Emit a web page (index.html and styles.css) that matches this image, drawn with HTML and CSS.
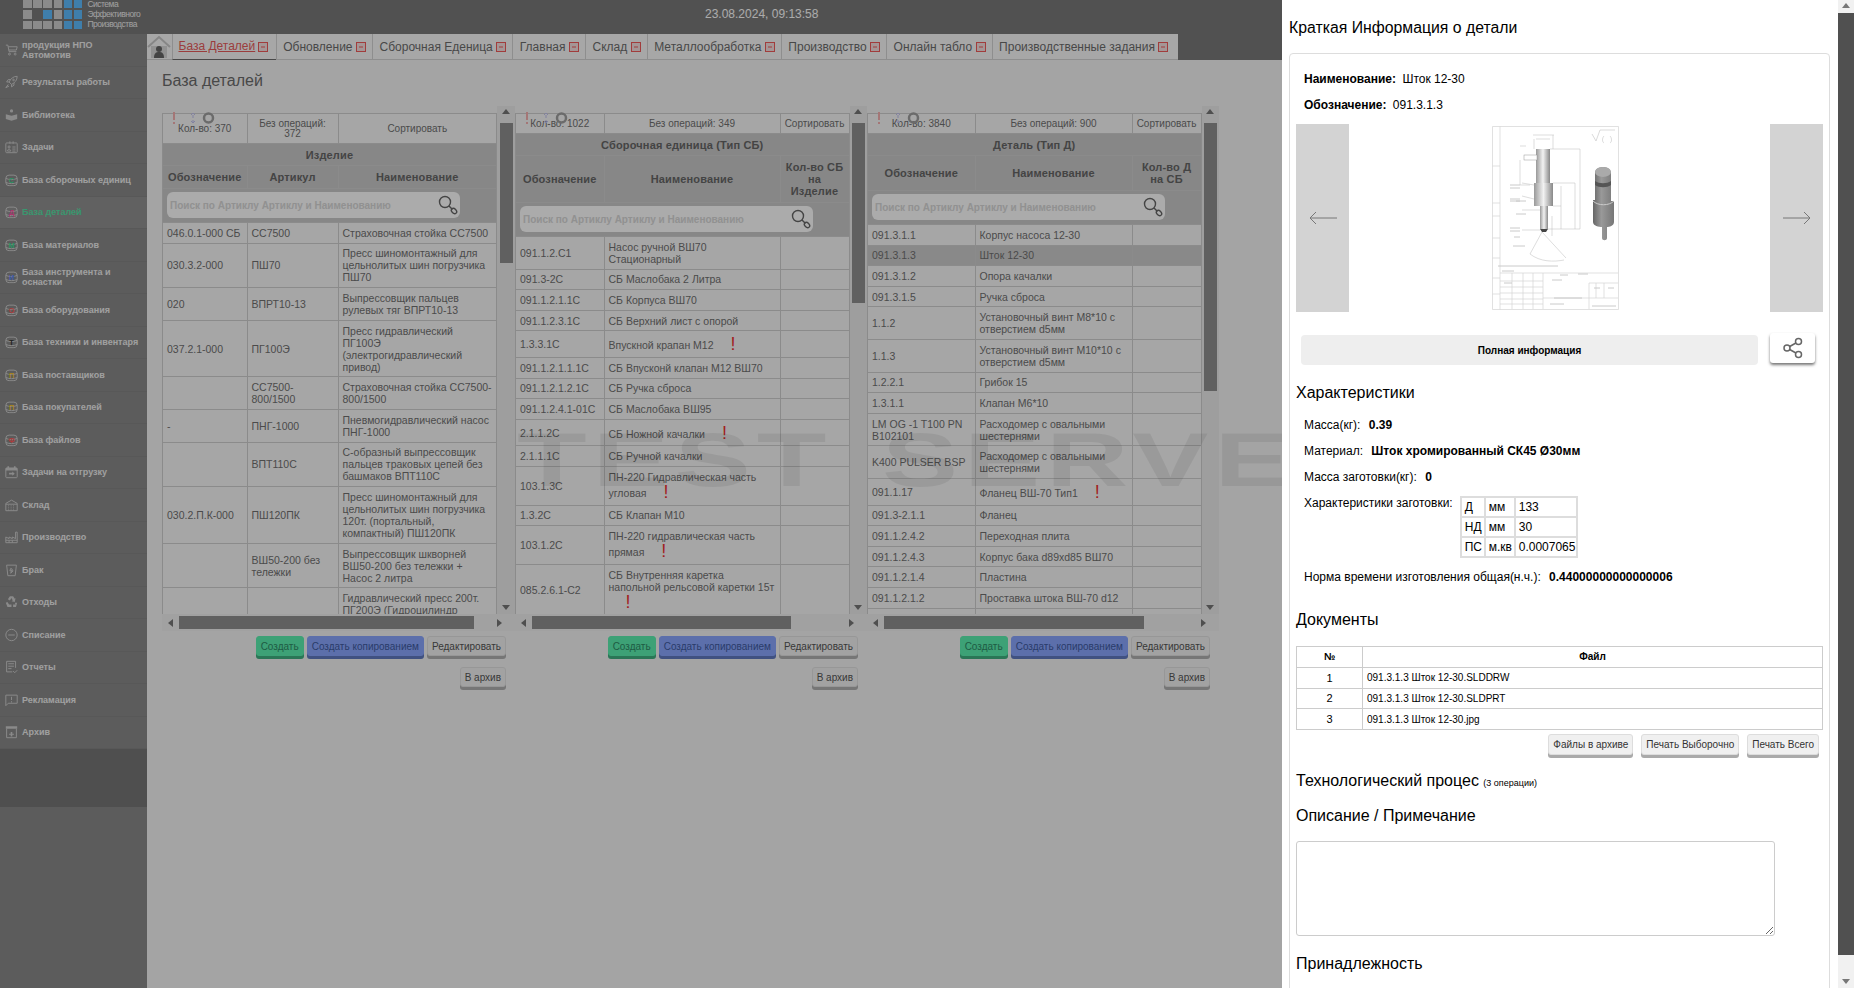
FILE: index.html
```html
<!DOCTYPE html>
<html lang="ru">
<head>
  <meta charset="UTF-8">
  <meta name="viewport" content="width=device-width, initial-scale=1.0">
  <title>База деталей</title>
  <link rel="stylesheet" href="styles.css">
</head>
<body>

  <!-- иконки меню -->
  <svg class="sprite" aria-hidden="true">
    <symbol id="i-cart" viewBox="0 0 16 16"><path d="M1 2h2.5l1.5 8h9M4 4h11l-1 4H4.6"/><circle cx="5.5" cy="13" r="1.2"/><circle cx="12.5" cy="13" r="1.2"/></symbol>
    <symbol id="i-rocket" viewBox="0 0 16 16"><path d="M15 1c-5 0-8 3-10 7l3 3c4-2 7-5 7-10zM5 8H2l2-3h3M8 11v3l3-2V9M4 11l-3 4 4-2"/><circle cx="10.5" cy="5.500" r="1"/></symbol>
    <symbol id="i-book" viewBox="0 0 16 16"><circle class="fill" cx="8" cy="3" r="2"/><path class="fill" d="M1 7l7 2 7-2v6l-7 2-7-2z"/></symbol>
    <symbol id="i-card" viewBox="0 0 16 16"><rect x="1" y="3" width="14" height="12" rx="1"/><path d="M6 1v3M10 1v3M9 8h4M9 10.500h4M9 13h4"/><circle cx="5" cy="8" r="1.300"/><path d="M3 13c0-3 4-3 4 0z"/></symbol>
    <symbol id="i-db" viewBox="0 0 16 16"><rect x="1" y="2" width="14" height="13" rx="4"/><path d="M1 6c4 2 10 2 14 0M1 11c4 2 10 2 14 0"/></symbol>
    <symbol id="i-cal" viewBox="0 0 16 16"><rect x="1" y="3" width="14" height="12" rx="1"/><path class="fill" d="M1 3h14v3H1zM3 1h2v2H3zM11 1h2v2h-2zM5 9h4V7.500l3 2.500-3 2.500V11H5z"/></symbol>
    <symbol id="i-store" viewBox="0 0 16 16"><path d="M1 15V6l7-4 7 4v9zM1 7h14M4 9h1M7 9h1M10 9h1M4 11.500h1M7 11.500h1M10 11.500h1M4 14h1M7 14h1M10 14h1"/></symbol>
    <symbol id="i-factory" viewBox="0 0 16 16"><path d="M1 15V8l4 2V8l4 2V8l4 2V2h2v13zM1 12h14M5 12v3M9 12v3"/></symbol>
    <symbol id="i-trash" viewBox="0 0 16 16"><path d="M2 2h12l-1.500 13h-9zM7 6l2 1-1 2h2l-3 3 1-3H6z"/></symbol>
    <symbol id="i-recycle" viewBox="0 0 16 16"><path class="fill" d="M6 1h4l2 3 1-1-1 5-4-1 1.500-1L8 3 6 6 3.500 4.500zM1 9l2-1 2 3h3v3H3zM15 9l-1.500 5H10v-3h3l-1-2z"/></symbol>
    <symbol id="i-minus" viewBox="0 0 16 16"><circle cx="8" cy="8" r="7"/><path d="M4 8h8"/></symbol>
    <symbol id="i-report" viewBox="0 0 16 16"><path d="M9 14H2V1h11v8M4 4h7M4 7h7M4 10h4M10 13l2 2 3-3"/></symbol>
    <symbol id="i-msg" viewBox="0 0 16 16"><path d="M1 2h14v10H4l-3 3zM8 4v4M8 9.500v1.500"/></symbol>
    <symbol id="i-archive" viewBox="0 0 16 16"><path class="fill" d="M1 1h14v3H1zM7 8h2v2h2v1.500H9v2H7v-2H5V10h2z"/><path d="M2 4v11h12V4"/></symbol>
    <symbol id="i-close" viewBox="0 0 10 10"><rect x=".5" y=".5" width="9" height="9"/><path d="M3 5h4"/></symbol>
    <symbol id="i-search" viewBox="0 0 20 20"><circle cx="7" cy="7" r="5.500"/><path d="M11 11l3.500 3.500"/><ellipse cx="16" cy="16" rx="3" ry="2.200" transform="rotate(45 16 16)"/></symbol>
    <symbol id="i-marks" viewBox="0 0 50 14"><path class="m-red" d="M4 0v8M4 10v2"/><path class="m-blue" d="M23 3v3M21 3l2-2 2 2M23 8v3M21 9l2 2 2-2"/><circle class="m-ring" cx="38.500" cy="6" r="4.500"/></symbol>
  </svg>

  <div class="app">

    <!-- шапка -->
    <header class="topbar">
      <div class="logo">
        <div class="logo-grid">
          <i></i><i></i><i></i><i></i><i class="b"></i><i class="b"></i>
          <i></i><i class="e"></i><i class="b"></i><i></i><i class="b"></i><i class="b"></i>
          <i></i><i></i><i></i><i></i><i class="b"></i><i class="b"></i>
        </div>
        <div class="logo-text">Система<br>Эффективного<br>Производства</div>
      </div>
      <div class="clock">23.08.2024, 09:13:58</div>
    </header>

    <!-- меню -->
    <nav class="side">
      <a class="side-item"><svg class="ico"><use href="#i-cart"/></svg><span>продукция НПО<br>Автомотив</span></a>
      <a class="side-item"><svg class="ico"><use href="#i-rocket"/></svg><span>Результаты работы</span></a>
      <a class="side-item"><svg class="ico"><use href="#i-book"/></svg><span>Библиотека</span></a>
      <a class="side-item"><svg class="ico"><use href="#i-card"/></svg><span>Задачи</span></a>
      <a class="side-item"><svg class="ico db green" viewBox="0 0 16 16"><use href="#i-db"/><text x="8" y="11.500">С</text></svg><span>База сборочных единиц</span></a>
      <a class="side-item active"><svg class="ico db pink" viewBox="0 0 16 16"><use href="#i-db"/><text x="8" y="12">Д</text></svg><span>База деталей</span></a>
      <a class="side-item"><svg class="ico db green" viewBox="0 0 16 16"><use href="#i-db"/><text x="8" y="11.500">М</text></svg><span>База материалов</span></a>
      <a class="side-item"><svg class="ico db blue" viewBox="0 0 16 16"><use href="#i-db"/><text x="8" y="11.500">И</text></svg><span>База инструмента и<br>оснастки</span></a>
      <a class="side-item"><svg class="ico db red" viewBox="0 0 16 16"><use href="#i-db"/><text x="8" y="11.500">О</text></svg><span>База оборудования</span></a>
      <a class="side-item"><svg class="ico db dark" viewBox="0 0 16 16"><use href="#i-db"/><text x="8" y="11.500">Т</text></svg><span>База техники и инвентаря</span></a>
      <a class="side-item"><svg class="ico db yellow" viewBox="0 0 16 16"><use href="#i-db"/><text x="8" y="11.500">П</text></svg><span>База поставщиков</span></a>
      <a class="side-item"><svg class="ico db yellow" viewBox="0 0 16 16"><use href="#i-db"/><text x="8" y="11.500">П</text></svg><span>База покупателей</span></a>
      <a class="side-item"><svg class="ico db red" viewBox="0 0 16 16"><use href="#i-db"/><text x="8" y="11.500">Ф</text></svg><span>База файлов</span></a>
      <a class="side-item"><svg class="ico"><use href="#i-cal"/></svg><span>Задачи на отгрузку</span></a>
      <a class="side-item"><svg class="ico"><use href="#i-store"/></svg><span>Склад</span></a>
      <a class="side-item"><svg class="ico"><use href="#i-factory"/></svg><span>Производство</span></a>
      <a class="side-item"><svg class="ico"><use href="#i-trash"/></svg><span>Брак</span></a>
      <a class="side-item"><svg class="ico"><use href="#i-recycle"/></svg><span>Отходы</span></a>
      <a class="side-item"><svg class="ico"><use href="#i-minus"/></svg><span>Списание</span></a>
      <a class="side-item"><svg class="ico"><use href="#i-report"/></svg><span>Отчеты</span></a>
      <a class="side-item"><svg class="ico"><use href="#i-msg"/></svg><span>Рекламация</span></a>
      <a class="side-item"><svg class="ico"><use href="#i-archive"/></svg><span>Архив</span></a>
      <div class="side-foot"></div>
    </nav>

    <main class="content">

      <!-- вкладки -->
      <div class="tabs">
        <div class="tab-home">
          <svg viewBox="0 0 24 24" width="24" height="26">
            <path class="home-wall" d="M4 11h16v12H4z"/>
            <path class="home-roof" d="M1 12L12 2l11 10"/>
            <circle class="home-man" cx="12" cy="14" r="3"/>
            <path class="home-man" d="M7 23c0-5 2-6 5-6s5 1 5 6z"/>
          </svg>
        </div>
        <div class="tab active"><span>База Деталей</span><svg class="tab-x"><use href="#i-close"/></svg></div>
        <div class="tab"><span>Обновление</span><svg class="tab-x"><use href="#i-close"/></svg></div>
        <div class="tab"><span>Сборочная Еденица</span><svg class="tab-x"><use href="#i-close"/></svg></div>
        <div class="tab"><span>Главная</span><svg class="tab-x"><use href="#i-close"/></svg></div>
        <div class="tab"><span>Склад</span><svg class="tab-x"><use href="#i-close"/></svg></div>
        <div class="tab"><span>Металлообработка</span><svg class="tab-x"><use href="#i-close"/></svg></div>
        <div class="tab"><span>Производство</span><svg class="tab-x"><use href="#i-close"/></svg></div>
        <div class="tab"><span>Онлайн табло</span><svg class="tab-x"><use href="#i-close"/></svg></div>
        <div class="tab"><span>Производственные задания</span><svg class="tab-x"><use href="#i-close"/></svg></div>
      </div>

      <h1 class="page-title">База деталей</h1>

      <div class="panels">

        <!-- Изделие -->
        <section class="panel panel-a">
          <div class="view">
            <svg class="marks"><use href="#i-marks"/></svg>
            <table class="grid">
              <colgroup><col class="a1"><col class="a2"><col></colgroup>
              <thead>
                <tr class="r-info"><td>Кол-во: 370</td><td>Без операций: 372</td><td>Сортировать</td></tr>
                <tr><th colspan="3" class="r-title">Изделие</th></tr>
                <tr><th>Обозначение</th><th>Артикул</th><th>Наименование</th></tr>
                <tr><th colspan="3" class="r-search"><div class="search"><input type="text" placeholder="Поиск по Артиклу Артиклу и Наименованию"><svg class="search-ico"><use href="#i-search"/></svg></div></th></tr>
              </thead>
              <tbody>
                <tr><td>046.0.1-000 СБ</td><td>СС7500</td><td>Страховочная стойка СС7500</td></tr>
                <tr><td>030.3.2-000</td><td>ПШ70</td><td>Пресс шиномонтажный для<br>цельнолитых шин погрузчика<br>ПШ70</td></tr>
                <tr><td>020</td><td>ВПРТ10-13</td><td>Выпрессовщик пальцев<br>рулевых тяг ВПРТ10-13</td></tr>
                <tr><td>037.2.1-000</td><td>ПГ100Э</td><td>Пресс гидравлический<br>ПГ100Э<br>(электрогидравлический<br>привод)</td></tr>
                <tr><td></td><td>СС7500-800/1500</td><td>Страховочная стойка СС7500-800/1500</td></tr>
                <tr><td>-</td><td>ПНГ-1000</td><td>Пневмогидравлический насос ПНГ-1000</td></tr>
                <tr><td></td><td>ВПТ110С</td><td>С-образный выпрессовщик<br>пальцев траковых цепей без<br>башмаков ВПТ110С</td></tr>
                <tr><td>030.2.П.К-000</td><td>ПШ120ПК</td><td>Пресс шиномонтажный для<br>цельнолитых шин погрузчика<br>120т. (портальный,<br>компактный) ПШ120ПК</td></tr>
                <tr><td></td><td>ВШ50-200 без тележки</td><td>Выпрессовщик шкворней<br>ВШ50-200 без тележки +<br>Насос 2 литра</td></tr>
                <tr><td></td><td></td><td>Гидравлический пресс 200т.<br>ПГ200Э (Гидроцилиндр<br>200т, насос)</td></tr>
              </tbody>
            </table>
          </div>
          <div class="vbar"><b class="up"></b><span class="thumb"></span><b class="down"></b></div>
          <div class="hbar"><b class="left"></b><span class="thumb"></span><b class="right"></b></div>
          <div class="actions">
            <button class="btn green">Создать</button>
            <button class="btn blue">Создать копированием</button>
            <button class="btn">Редактировать</button>
            <button class="btn">В архив</button>
          </div>
        </section>

        <!-- Сборочная единица -->
        <section class="panel panel-b">
          <div class="view">
            <svg class="marks"><use href="#i-marks"/></svg>
            <table class="grid">
              <colgroup><col class="b1"><col><col class="b3"></colgroup>
              <thead>
                <tr class="r-info"><td>Кол-во: 1022</td><td>Без операций: 349</td><td>Сортировать</td></tr>
                <tr><th colspan="3" class="r-title">Сборочная единица (Тип СБ)</th></tr>
                <tr><th>Обозначение</th><th>Наименование</th><th>Кол-во СБ на Изделие</th></tr>
                <tr><th colspan="3" class="r-search"><div class="search"><input type="text" placeholder="Поиск по Артиклу Артиклу и Наименованию"><svg class="search-ico"><use href="#i-search"/></svg></div></th></tr>
              </thead>
              <tbody>
                <tr><td>091.1.2.C1</td><td>Насос ручной ВШ70<br>Стационарный</td><td></td></tr>
                <tr><td>091.3-2С</td><td>СБ Маслобака 2 Литра</td><td></td></tr>
                <tr><td>091.1.2.1.1С</td><td>СБ Корпуса ВШ70</td><td></td></tr>
                <tr><td>091.1.2.3.1С</td><td>СБ Верхний лист с опорой</td><td></td></tr>
                <tr><td>1.3.3.1С</td><td>Впускной крапан М12<span class="warn">!</span></td><td></td></tr>
                <tr><td>091.1.2.1.1.1С</td><td>СБ Впусконй клапан М12 ВШ70</td><td></td></tr>
                <tr><td>091.1.2.1.2.1С</td><td>СБ Ручка сброса</td><td></td></tr>
                <tr><td>091.1.2.4.1-01С</td><td>СБ Маслобака ВШ95</td><td></td></tr>
                <tr><td>2.1.1.2С</td><td>СБ Ножной качалки<span class="warn">!</span></td><td></td></tr>
                <tr><td>2.1.1.1С</td><td>СБ Ручной качалки</td><td></td></tr>
                <tr><td>103.1.3С</td><td>ПН-220 Гидравлическая часть<br>угловая<span class="warn">!</span></td><td></td></tr>
                <tr><td>1.3.2С</td><td>СБ Клапан М10</td><td></td></tr>
                <tr><td>103.1.2С</td><td>ПН-220 гидравлическая часть<br>прямая<span class="warn">!</span></td><td></td></tr>
                <tr><td>085.2.6.1-С2</td><td>СБ Внутренняя каретка<br>напольной рельсовой каретки 15т<br><span class="warn">!</span></td><td></td></tr>
              </tbody>
            </table>
          </div>
          <div class="vbar"><b class="up"></b><span class="thumb"></span><b class="down"></b></div>
          <div class="hbar"><b class="left"></b><span class="thumb"></span><b class="right"></b></div>
          <div class="actions">
            <button class="btn green">Создать</button>
            <button class="btn blue">Создать копированием</button>
            <button class="btn">Редактировать</button>
            <button class="btn">В архив</button>
          </div>
        </section>

        <!-- Деталь -->
        <section class="panel panel-c">
          <div class="view">
            <svg class="marks"><use href="#i-marks"/></svg>
            <table class="grid">
              <colgroup><col class="c1"><col><col class="b3"></colgroup>
              <thead>
                <tr class="r-info"><td>Кол-во: 3840</td><td>Без операций: 900</td><td>Сортировать</td></tr>
                <tr><th colspan="3" class="r-title">Деталь (Тип Д)</th></tr>
                <tr><th>Обозначение</th><th>Наименование</th><th>Кол-во Д на СБ</th></tr>
                <tr><th colspan="3" class="r-search"><div class="search"><input type="text" placeholder="Поиск по Артиклу Артиклу и Наименованию"><svg class="search-ico"><use href="#i-search"/></svg></div></th></tr>
              </thead>
              <tbody>
                <tr><td>091.3.1.1</td><td>Корпус насоса 12-30</td><td></td></tr>
                <tr class="selected"><td>091.3.1.3</td><td>Шток 12-30</td><td></td></tr>
                <tr><td>091.3.1.2</td><td>Опора качалки</td><td></td></tr>
                <tr><td>091.3.1.5</td><td>Ручка сброса</td><td></td></tr>
                <tr><td>1.1.2</td><td>Установочный винт М8*10 с<br>отверстием d5мм</td><td></td></tr>
                <tr><td>1.1.3</td><td>Установочный винт М10*10 с<br>отверстием d5мм</td><td></td></tr>
                <tr><td>1.2.2.1</td><td>Грибок 15</td><td></td></tr>
                <tr><td>1.3.1.1</td><td>Клапан М6*10</td><td></td></tr>
                <tr><td>LM OG -1 T100 PN B102101</td><td>Расходомер с овальными<br>шестернями</td><td></td></tr>
                <tr><td>K400 PULSER BSP</td><td>Расходомер с овальными<br>шестернями</td><td></td></tr>
                <tr><td>091.1.17</td><td>Фланец ВШ-70 Тип1<span class="warn">!</span></td><td></td></tr>
                <tr><td>091.3-2.1.1</td><td>Фланец</td><td></td></tr>
                <tr><td>091.1.2.4.2</td><td>Переходная плита</td><td></td></tr>
                <tr><td>091.1.2.4.3</td><td>Корпус бака d89xd85 ВШ70</td><td></td></tr>
                <tr><td>091.1.2.1.4</td><td>Пластина</td><td></td></tr>
                <tr><td>091.1.2.1.2</td><td>Проставка штока ВШ-70 d12</td><td></td></tr>
                <tr><td>091.1.2.1.1</td><td>Корпус штока ВШ-70</td><td></td></tr>
              </tbody>
            </table>
          </div>
          <div class="vbar"><b class="up"></b><span class="thumb"></span><b class="down"></b></div>
          <div class="hbar"><b class="left"></b><span class="thumb"></span><b class="right"></b></div>
          <div class="actions">
            <button class="btn green">Создать</button>
            <button class="btn blue">Создать копированием</button>
            <button class="btn">Редактировать</button>
            <button class="btn">В архив</button>
          </div>
        </section>

      </div>

      <div class="watermark">TEST SERVER</div>
    </main>
  </div>

  <div class="shade"></div>

  <!-- Краткая информация -->
  <aside class="drawer">
    <div class="drawer-body">
      <h2 class="drawer-title">Краткая Информация о детали</h2>
      <div class="card">
        <p class="info"><b>Наименование:</b> Шток 12-30</p>
        <p class="info"><b>Обозначение:</b> 091.3.1.3</p>

        <div class="gallery">
          <div class="nav-btn">
            <svg viewBox="0 0 28 14" width="28" height="14"><path d="M28 7H1M7 1L1 7l6 6"/></svg>
          </div>
          <svg class="drawing" viewBox="0 0 127 184" width="127" height="184">
            <g class="d-frame">
              <path d="M.5.5h126v183H.5zM8 .5v183M.5 77H8M.5 90H8M.5 40H8M.5 112H8M.5 132H8M.5 152H8M.5 168H8"/>
              <path d="M8 147h118M51 147v36M8 155h43M8 161h43M8 167h43M8 173h43M8 178h43M20 147v36M31 147v36M41 147v36M97 157v26M97 157h29M97 172h29M104 157v15M112 157v15M51 172h46"/>
            </g>
            <rect x="44" y="23" width="14" height="34" fill="url(#shaft)"/>
            <rect x="42" y="57" width="19" height="23" fill="url(#shaft)"/>
            <rect x="48" y="80" width="8" height="23" fill="url(#shaft)"/>
            <path class="d-dark" d="M48 103l2 3h4l2-3z"/>
            <rect x="32" y="29" width="13" height="5" fill="#fff" stroke="#999" stroke-width=".5"/>
            <path class="d-thin" d="M42 23V13M61 23V9M44 13h14M41 9h21M58 23h30v80H56M61 57h22M83 57v46M61 80h8M69 60v43M28 34v25M28 20h6M28 59h10M30 57l12 2M30 70l12 3M30 84h18M30 104h18M60 90v20M50 106l-12 22M50 106l24 26M38 128c10 8 24 8 34 6"/>
            <path class="d-faint" d="M18 59h10M18 62h10M18 73h10M18 75h10M24 75h10M24 88h10M18 102h10M18 105h10M22 111h6M21 120h12M6 140h60M10 145h12M68 149h8M86 148h10M60 154h10M62 172h28M58 178h14M100 180h24M102 162h6M116 162h6M12 157h8"/>
            <path class="d-rough" d="M100 8l4 7 4-11h15M112 10c-2 2-2 6 0 7M118 10c2 2 2 6 0 7"/>
            <path fill="url(#iso)" d="M103 47c0-8 16-8 16 0v28h3v21c0 4-5 5-7 5v11c0 3-5 3-5 0v-11c-3 0-9-1-9-5V74h2z"/>
            <ellipse cx="111" cy="46" rx="8" ry="5" fill="#aaa"/>
            <path d="M103 55c4 3 12 3 16 0v4c-4 3-12 3-16 0z" fill="#555"/>
            <path d="M101 75c5 5 16 5 21 0" fill="none" stroke="#ccc"/>
            <defs>
              <linearGradient id="shaft"><stop offset="0" stop-color="#999"/><stop offset=".5" stop-color="#f2f2f2"/><stop offset="1" stop-color="#888"/></linearGradient>
              <linearGradient id="iso"><stop offset="0" stop-color="#666"/><stop offset=".4" stop-color="#999"/><stop offset="1" stop-color="#777"/></linearGradient>
            </defs>
          </svg>
          <div class="nav-btn">
            <svg viewBox="0 0 28 14" width="28" height="14"><path d="M0 7h27M21 1l6 6-6 6"/></svg>
          </div>
        </div>

        <div class="full-row">
          <button class="full-btn">Полная информация</button>
          <button class="share-btn">
            <svg viewBox="0 0 22 22" width="22" height="22"><circle cx="16.500" cy="4.500" r="3"/><circle cx="5" cy="11" r="3"/><circle cx="16.500" cy="17.500" r="3"/><path d="M7.700 9.500l6.200-3.500M7.700 12.500l6.200 3.500"/></svg>
          </button>
        </div>

        <h3 class="sec sec-props">Характеристики</h3>
        <p class="prop">Масса(кг): <b>0.39</b></p>
        <p class="prop">Материал: <b>Шток хромированный СК45 Ø30мм</b></p>
        <p class="prop">Масса заготовки(кг): <b>0</b></p>
        <div class="blank">
          <span>Характеристики заготовки:</span>
          <table class="blank-table">
            <colgroup><col class="bl1"><col class="bl2"><col></colgroup>
            <tr><td>Д</td><td>мм</td><td>133</td></tr>
            <tr><td>НД</td><td>мм</td><td>30</td></tr>
            <tr><td>ПС</td><td>м.кв</td><td>0.0007065</td></tr>
          </table>
        </div>
        <p class="prop">Норма времени изготовления общая(н.ч.): <b>0.44000000000000006</b></p>

        <h3 class="sec sec-docs">Документы</h3>
        <table class="docs">
          <colgroup><col class="docs-n"><col></colgroup>
          <thead><tr><th>№</th><th>Файл</th></tr></thead>
          <tbody>
            <tr><td>1</td><td>091.3.1.3 Шток 12-30.SLDDRW</td></tr>
            <tr><td>2</td><td>091.3.1.3 Шток 12-30.SLDPRT</td></tr>
            <tr><td>3</td><td>091.3.1.3 Шток 12-30.jpg</td></tr>
          </tbody>
        </table>
        <div class="docs-actions">
          <button class="btn">Файлы в архиве</button>
          <button class="btn">Печать Выборочно</button>
          <button class="btn">Печать Всего</button>
        </div>

        <h3 class="sec sec-tech">Технологический процес <small>(3 операции)</small></h3>
        <h3 class="sec sec-note">Описание / Примечание</h3>
        <textarea class="note"></textarea>
        <h3 class="sec sec-owner">Принадлежность</h3>
      </div>
    </div>
    <div class="drawer-bar"><b class="up"></b><span class="thumb"></span><b class="down"></b></div>
  </aside>

</body>
</html>
```

FILE: styles.css
```css
* {
  box-sizing: border-box;
}

html, body {
  height: 100%;
}

body {
  margin: 0;
  overflow: hidden;
  font-family: "Liberation Sans", Arial, sans-serif;
  font-size: 12px;
  color: #000;
  background-color: #f5f5f5;
}

.sprite {
  display: none;
}

.app {
  display: grid;
  grid-template-columns: 147px 1fr;
  grid-template-rows: 34px 1fr;
  height: 100vh;
}

/* шапка */
.topbar {
  grid-column: 1 / 3;
  display: flex;
  background-color: #7a7a7a;
  overflow: hidden;
}

.logo {
  display: flex;
  gap: 5px;
  margin-left: 23px;
  width: 682px;
}

.logo-grid {
  display: grid;
  grid-template-columns: repeat(6, 8.5px);
  grid-template-rows: 8px 9px 8px;
  gap: 2px 1.700px;
  height: 29px;
}

.logo-grid i {
  background-color: #d0d0d0;
}

.logo-grid .b {
  background-color: #5fbdff;
}

.logo-grid .e {
  background: none;
}

.logo-text {
  font-size: 8.500px;
  line-height: 10px;
  letter-spacing: -.5px;
  color: #eee;
  margin-top: -1px;
}

.clock {
  line-height: 29px;
  font-size: 12px;
  color: #fff;
}

/* меню */
.side {
  display: grid;
  grid-auto-rows: 32.500px;
  background-color: #898989;
  overflow: hidden;
}

.side-item {
  display: flex;
  align-items: center;
  gap: 4px;
  padding-left: 5px;
  font-size: 9px;
  font-weight: bold;
  line-height: 10px;
  color: #eee;
  border-bottom: 1px solid #848484;
}

.side-item.active {
  color: #57e0a6;
  background-color: #919191;
}

.ico {
  flex: none;
  width: 13px;
  height: 14px;
  fill: none;
  stroke: #cecece;
  stroke-width: 1.200;
}

.ico .fill, symbol .fill {
  fill: #cecece;
  stroke: none;
}

.ico text {
  font-size: 9px;
  font-weight: bold;
  text-anchor: middle;
  stroke: none;
}

.db.green text { fill: #3ddb93; }
.db.pink text { fill: #ff4fa6; }
.db.blue text { fill: #5b86ff; }
.db.red text { fill: #ff5a5a; }
.db.dark text { fill: #333; }
.db.yellow text { fill: #f4c430; }

.side-foot {
  height: 58px;
  background-color: #777;
}

/* вкладки */
.content {
  position: relative;
  padding: 0;
  overflow: hidden;
}

.tabs {
  display: flex;
  height: 26px;
  background-color: #7a7a7a;
}

.tab-home {
  width: 25px;
  background-color: #fafafa;
  border-bottom: 1px solid #d4d4d4;
}

.home-wall { fill: #d8d8d8; }
.home-roof { fill: none; stroke: #c8c8c8; stroke-width: 2; }
.home-man { fill: #666; }

.tab {
  display: flex;
  align-items: center;
  gap: 3.500px;
  padding: 0 6px 0 6.500px;
  background-color: #fafafa;
  border-left: 1px solid #d4d4d4;
  border-bottom: 1px solid #d4d4d4;
  color: #6c6c6c;
  font-size: 12px;
}

.tab:last-child {
  padding-right: 10px;
}

.tab.active {
  padding: 0 7.500px 0 5.500px;
  gap: 3px;
  border-bottom: 1px solid #6c6c6c;
  color: #e85c5c;
}

.tab.active span {
  text-decoration: underline;
  margin-top: -2px;
}

.tab-x {
  width: 10px;
  height: 10px;
  fill: #f5e0e0;
  stroke: #f05a5a;
  stroke-width: 1;
}

.page-title {
  margin: 11px 0 15px 15px;
  font-size: 16px;
  font-weight: normal;
  line-height: 20px;
  color: #6c6c6c;
}

/* таблицы */
.panels {
  display: grid;
  grid-template-columns: 353px 352px 353px;
  margin-left: 15px;
  width: 1058px;
}

.panel {
  position: relative;
  display: grid;
  grid-template-columns: 335px 18px;
  grid-template-rows: 508px 17px auto;
}

.panel-b, .panel-c {
  grid-template-columns: 334.500px 17.500px;
}

.view {
  position: relative;
  padding-top: 7px;
  overflow: hidden;
}

.marks {
  position: absolute;
  top: 6px;
  left: 8px;
  width: 50px;
  height: 14px;
  fill: none;
}

.m-red { stroke: #f5b0b0; stroke-width: 2; }
.m-blue { stroke: #c0c0f0; stroke-width: 1; }
.m-ring { stroke: #a0a0a0; stroke-width: 2.500; }

.grid {
  width: 100%;
  table-layout: fixed;
  border-collapse: collapse;
  font-size: 10.500px;
  line-height: 12px;
  color: #707070;
}

.grid th, .grid td {
  border: 1px solid #d0d0d0;
  padding: 3.800px 2px 3.800px 4px;
  overflow-wrap: break-word;
}

.grid tbody tr {
  background-color: #f8f8f8;
}

.grid tbody tr.selected {
  background-color: #cdcdcd;
}

.grid thead th {
  padding: 5px 3px;
  font-size: 11px;
  letter-spacing: .150px;
  background-color: #c9c9c9;
  color: #666;
}

.grid .r-info td {
  padding: 3px 2px;
  font-size: 10px;
  line-height: 10px;
  text-align: center;
  height: 20px;
  background-color: #f8f8f8;
}

.panel-a .r-info td {
  height: 30px;
  padding: 3px 6px;
}

.grid thead th.r-title {
  height: 22px;
  padding: 4px;
}

.grid thead th.r-search {
  height: 34px;
  padding: 3px 5px 4px 4px;
}

.a1 { width: 84.500px; }
.a2 { width: 91px; }
.b1 { width: 88.500px; }
.b3 { width: 69px; }
.c1 { width: 107.500px; }

.search {
  position: relative;
  width: 293px;
  height: 26px;
}

.search input {
  width: 100%;
  height: 100%;
  border: 0;
  border-radius: 6px;
  padding: 0 30px 0 3px;
  background-color: #fff;
  font-family: inherit;
  font-size: 10px;
  font-weight: bold;
}

.search input::placeholder {
  color: #d8d8d8;
  letter-spacing: 0;
}

.search-ico {
  position: absolute;
  top: 3px;
  right: 2px;
  width: 20px;
  height: 20px;
  fill: none;
  stroke: #666;
  stroke-width: 1.400;
}

.warn {
  display: inline-block;
  margin-left: 17px;
  font-size: 18px;
  line-height: 18px;
  color: #f03030;
  vertical-align: -1px;
}

.vbar {
  display: flex;
  flex-direction: column;
  align-items: center;
  background-color: #ececec;
}

.vbar .thumb, .hbar .thumb {
  background-color: #8f8f8f;
}

.vbar .thumb {
  width: 13px;
}

.panel-a .vbar .thumb { height: 140px; }
.panel-b .vbar .thumb { height: 180px; }
.panel-c .vbar .thumb { height: 268px; }

.up, .down, .left, .right {
  flex: none;
  width: 0;
  height: 0;
  border: 4px solid transparent;
}

.up {
  margin: 3px 0 9px;
  border-top: 0;
  border-bottom: 5px solid #777;
}

.down {
  margin-top: auto;
  margin-bottom: 4px;
  border-bottom: 0;
  border-top: 5px solid #777;
}

.hbar {
  grid-column: 1 / 3;
  display: flex;
  align-items: center;
  padding: 0 13px 0 6px;
  background-color: #f0f0f0;
}

.left {
  margin-right: 6px;
  border-left: 0;
  border-right: 5px solid #777;
}

.right {
  margin-left: auto;
  border-right: 0;
  border-left: 5px solid #777;
}

.hbar .thumb {
  height: 13px;
}

.panel-a .hbar .thumb { width: 295px; }
.panel-b .hbar .thumb { width: 259px; }
.panel-c .hbar .thumb { width: 260px; }

.actions {
  grid-column: 1 / 3;
  display: flex;
  flex-wrap: wrap;
  justify-content: flex-end;
  gap: 11px 3px;
  padding: 5px 9px 0 70px;
}

.btn {
  height: 20px;
  padding: 0 4px;
  border: 1px solid #e2e2e2;
  border-radius: 3px;
  background-color: #f2f2f2;
  box-shadow: 0 3px 0 #b0b0b0;
  font-family: inherit;
  font-size: 10px;
  color: #555;
}

.btn.green {
  background-color: #5bf0b0;
  border-color: #5bf0b0;
  box-shadow: 0 3px 0 #3fb080;
  color: #2e8a66;
}

.btn.blue {
  background-color: #8aa6ff;
  border-color: #8aa6ff;
  box-shadow: 0 3px 0 #6079c0;
  color: #3e5aa0;
}

.watermark {
  position: absolute;
  top: 383px;
  left: 370px;
  font-size: 76px;
  line-height: 86px;
  font-weight: bold;
  letter-spacing: 4px;
  word-spacing: 8px;
  white-space: nowrap;
  color: rgba(0, 0, 0, .07);
  transform: scaleX(1.5);
  transform-origin: left center;
  pointer-events: none;
}

/* затемнение */
.shade {
  position: fixed;
  inset: 0;
  background-color: rgba(0, 0, 0, .33);
}

/* Краткая информация */
.drawer {
  position: fixed;
  top: 0;
  right: 0;
  bottom: 0;
  left: 1282px;
  display: flex;
  background-color: #fff;
}

.drawer-body {
  flex: 1;
  padding: 18px 8px 0 7px;
  overflow: hidden;
}

.drawer-title {
  margin: 0 0 15px;
  font-size: 15.800px;
  font-weight: normal;
  line-height: 20px;
}

.card {
  height: 940px;
  padding: 12px 6px 0 6px;
  border: 1px solid #ddd;
  border-radius: 4px 4px 0 0;
}

.info {
  margin: 0 0 0 8px;
  line-height: 26px;
}

.info b {
  margin-right: 3px;
}

.gallery {
  display: flex;
  align-items: center;
  justify-content: space-between;
  height: 188px;
  margin-top: 6px;
}

.nav-btn {
  display: flex;
  align-items: center;
  justify-content: center;
  width: 53px;
  height: 188px;
  background-color: #d3d3d3;
}

.nav-btn svg {
  fill: none;
  stroke: #777;
  stroke-width: 1;
}

.drawing {
  display: block;
  margin-right: 8px;
}

.d-frame path { fill: none; stroke: #d4d4d4; stroke-width: .7; }
.d-dark { fill: #444; }
.d-thin { fill: none; stroke: #bbb; stroke-width: .5; }
.d-faint { fill: none; stroke: #c4c4c4; stroke-width: .9; }
.d-rough { fill: none; stroke: #ccc; stroke-width: .7; }

.full-row {
  display: flex;
  gap: 12px;
  margin-top: 21px;
  padding-left: 5px;
}

.full-btn {
  width: 457px;
  height: 30px;
  margin-top: 2px;
  border: 0;
  border-radius: 4px;
  background-color: #eee;
  font-family: inherit;
  font-size: 10px;
  font-weight: bold;
}

.share-btn {
  display: flex;
  align-items: center;
  justify-content: center;
  width: 45px;
  height: 30px;
  padding: 0;
  border: 0;
  border-radius: 3px;
  background-color: #fff;
  box-shadow: 0 2px 3px #777;
}

.share-btn svg {
  fill: none;
  stroke: #666;
  stroke-width: 1.500;
}

.sec {
  margin: 0;
  font-size: 16px;
  font-weight: normal;
  line-height: 20px;
}

.sec small {
  font-size: 9px;
}

.sec-props { margin-top: 18px; margin-bottom: 9px; }
.sec-docs { margin-top: 20px; margin-bottom: 16px; }
.sec-tech { margin-top: 16px; }
.sec-note { margin-top: 13px; margin-bottom: 15px; }
.sec-owner { margin-top: 18px; }

.prop {
  margin: 0 0 0 8px;
  line-height: 26px;
}

.prop b {
  margin-left: 5px;
}

.blank {
  display: flex;
  align-items: flex-start;
  gap: 7px;
  height: 74px;
  margin-left: 8px;
}

.blank span {
  margin-top: 6px;
  line-height: 14px;
}

.blank-table {
  margin-top: 6px;
  border-collapse: collapse;
  table-layout: fixed;
  width: 118px;
  height: 62px;
}

.blank-table td {
  padding: 0 3px;
  border: 2px solid #ddd;
}

.bl1 { width: 24px; }
.bl2 { width: 30px; }

.docs {
  width: 100%;
  table-layout: fixed;
  border-collapse: collapse;
  font-size: 10px;
}

.docs th, .docs td {
  height: 20.800px;
  padding: 0 4px;
  border: 1px solid #ccc;
}

.docs td:first-child {
  text-align: center;
  font-size: 11px;
}

.docs-n {
  width: 66px;
}

.docs-actions {
  display: flex;
  justify-content: flex-end;
  gap: 8px;
  margin-top: 4px;
  padding-right: 4px;
}

.docs-actions .btn {
  height: 21px;
  color: #333;
  background-color: #f0f0f0;
  border-color: #ddd;
  box-shadow: 0 3px 0 #aaa;
}

.note {
  display: block;
  width: 479px;
  height: 95px;
  border: 1px solid #ccc;
  border-radius: 3px;
}

.drawer-bar {
  flex: none;
  display: flex;
  flex-direction: column;
  align-items: center;
  width: 16px;
  background-color: #f1f1f1;
}

.drawer-bar .thumb {
  width: 16px;
  height: 942px;
  background-color: #505050;
}

.drawer-bar .up {
  margin: 3px 0 5px;
}
```
